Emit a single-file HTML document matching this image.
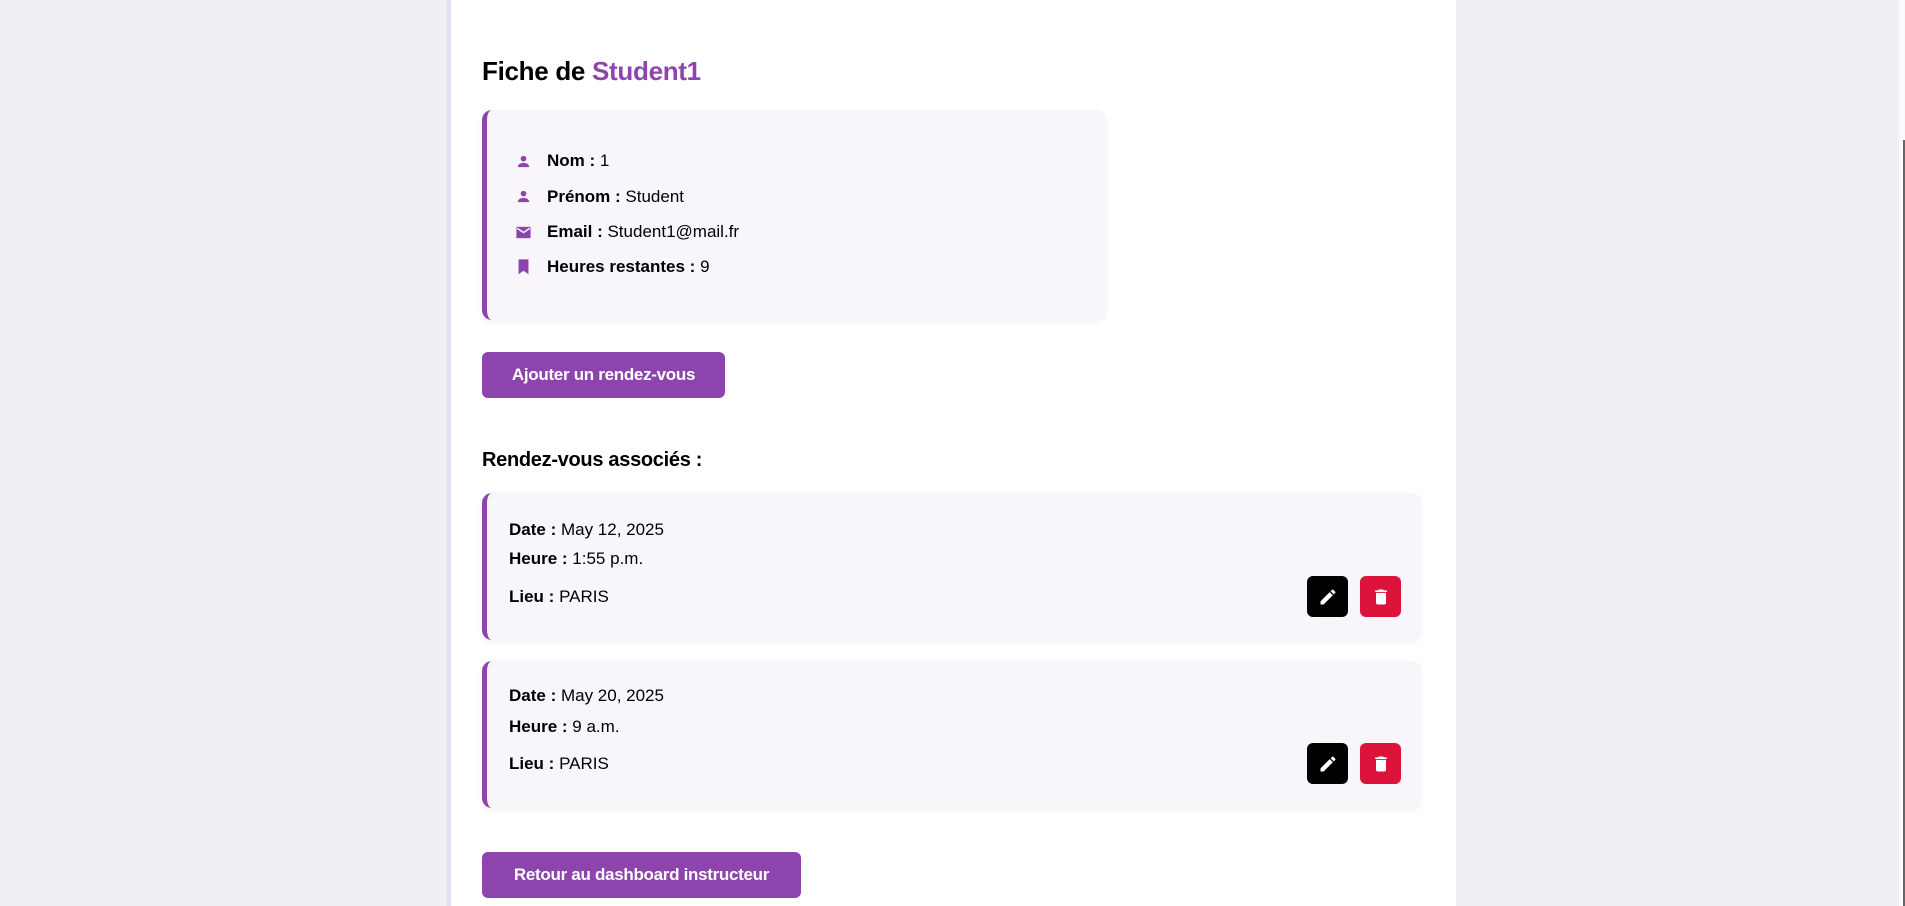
<!DOCTYPE html>
<html><head><meta charset="utf-8"><style>
*{box-sizing:border-box;margin:0;padding:0}
html,body{width:1905px;height:906px;overflow:hidden}
body{background:#f0eef5;font-family:"Liberation Sans",sans-serif;color:#000}
#root{position:relative;width:1905px;height:906px;overflow:hidden}
.wrap{position:absolute;left:447px;top:-12px;width:1009px;height:960px;background:#fff;border-left:4px solid #e6dcf8;border-radius:12px}
.abs{position:absolute}
h1{position:absolute;left:482px;top:56px;font-size:26px;font-weight:bold;letter-spacing:-0.3px}
h1 span{color:#8e44ad}
.info{left:482px;top:110px;width:624px;height:210px;background:#f8f6fb;border-left:5px solid #8e44ad;border-radius:10px;box-shadow:0 2px 6px rgba(0,0,0,.06)}
.row{position:absolute;left:547px;font-size:17px;line-height:20px}
.ic{position:absolute;left:515px;width:17px;height:17px}
.btn{position:absolute;background:#8e44ad;color:#fff;font-weight:bold;font-size:17px;border-radius:6px;display:flex;align-items:center;justify-content:center;letter-spacing:-0.3px}
h2{position:absolute;left:482px;top:449px;font-size:20px;font-weight:bold;letter-spacing:-0.3px}
.card{position:absolute;left:482px;width:939px;height:147px;background:#f8f6fb;border-left:5px solid #8e44ad;border-radius:10px;box-shadow:0 2px 6px rgba(0,0,0,.06)}
.l{position:absolute;left:509px;font-size:17px;line-height:20px}
.sq{position:absolute;width:41px;height:41px;border-radius:6px;display:flex;align-items:center;justify-content:center}
</style></head><body><div id="root">
<div class="wrap"></div>
<h1>Fiche de <span>Student1</span></h1>
<div class="abs info"></div>
<svg class="ic" style="top:153px" viewBox="0 0 24 24"><circle cx="12" cy="8" r="4" fill="#8e44ad"/><path d="M4 20c0-4 4-6 8-6s8 2 8 6z" fill="#8e44ad"/></svg>
<div class="row" style="top:151px"><b>Nom :</b> 1</div>
<svg class="ic" style="top:188px" viewBox="0 0 24 24"><circle cx="12" cy="8" r="4" fill="#8e44ad"/><path d="M4 20c0-4 4-6 8-6s8 2 8 6z" fill="#8e44ad"/></svg>
<div class="row" style="top:187px"><b>Prénom :</b> Student</div>
<svg class="ic" style="top:224px" viewBox="0 0 24 24"><path d="M2 4h20v16H2z" fill="#8e44ad"/><path d="M3 6l9 6 9-6" stroke="#f8f6fb" stroke-width="2" fill="none"/></svg>
<div class="row" style="top:222px"><b>Email :</b> Student1@mail.fr</div>
<svg class="ic" style="top:258px" viewBox="0 0 24 24"><path d="M5 2h14v21l-7-5-7 5z" fill="#8e44ad"/></svg>
<div class="row" style="top:257px"><b>Heures restantes :</b> 9</div>
<div class="btn" style="left:482px;top:352px;width:243px;height:46px">Ajouter un rendez-vous</div>
<h2>Rendez-vous associés :</h2>

<div class="card" style="top:493px"></div>
<div class="l" style="top:520px"><b>Date :</b> May 12, 2025</div>
<div class="l" style="top:549px"><b>Heure :</b> 1:55 p.m.</div>
<div class="l" style="top:587px"><b>Lieu :</b> PARIS</div>
<div class="sq" style="left:1307px;top:576px;background:#000"><svg width="20" height="20" viewBox="0 0 24 24"><path d="M3 17.25V21h3.75L17.8 9.94l-3.75-3.75zM20.7 7.04a1 1 0 000-1.41l-2.34-2.34a1 1 0 00-1.41 0l-1.83 1.83 3.75 3.75z" fill="#fff"/></svg></div>
<div class="sq" style="left:1360px;top:576px;background:#dc143c"><svg width="20" height="20" viewBox="0 0 24 24"><path d="M6 19c0 1.1.9 2 2 2h8c1.1 0 2-.9 2-2V7H6zM19 4h-3.5l-1-1h-5l-1 1H5v2h14z" fill="#fff"/></svg></div>

<div class="card" style="top:661px"></div>
<div class="l" style="top:686px"><b>Date :</b> May 20, 2025</div>
<div class="l" style="top:717px"><b>Heure :</b> 9 a.m.</div>
<div class="l" style="top:754px"><b>Lieu :</b> PARIS</div>
<div class="sq" style="left:1307px;top:743px;background:#000"><svg width="20" height="20" viewBox="0 0 24 24"><path d="M3 17.25V21h3.75L17.8 9.94l-3.75-3.75zM20.7 7.04a1 1 0 000-1.41l-2.34-2.34a1 1 0 00-1.41 0l-1.83 1.83 3.75 3.75z" fill="#fff"/></svg></div>
<div class="sq" style="left:1360px;top:743px;background:#dc143c"><svg width="20" height="20" viewBox="0 0 24 24"><path d="M6 19c0 1.1.9 2 2 2h8c1.1 0 2-.9 2-2V7H6zM19 4h-3.5l-1-1h-5l-1 1H5v2h14z" fill="#fff"/></svg></div>

<div class="btn" style="left:482px;top:852px;width:319px;height:46px">Retour au dashboard instructeur</div>
<div class="abs" style="left:1899px;top:0;width:6px;height:906px;background:#fafafa"></div>
<div class="abs" style="left:1903px;top:140px;width:2px;height:766px;background:#666"></div>
</div></body></html>
